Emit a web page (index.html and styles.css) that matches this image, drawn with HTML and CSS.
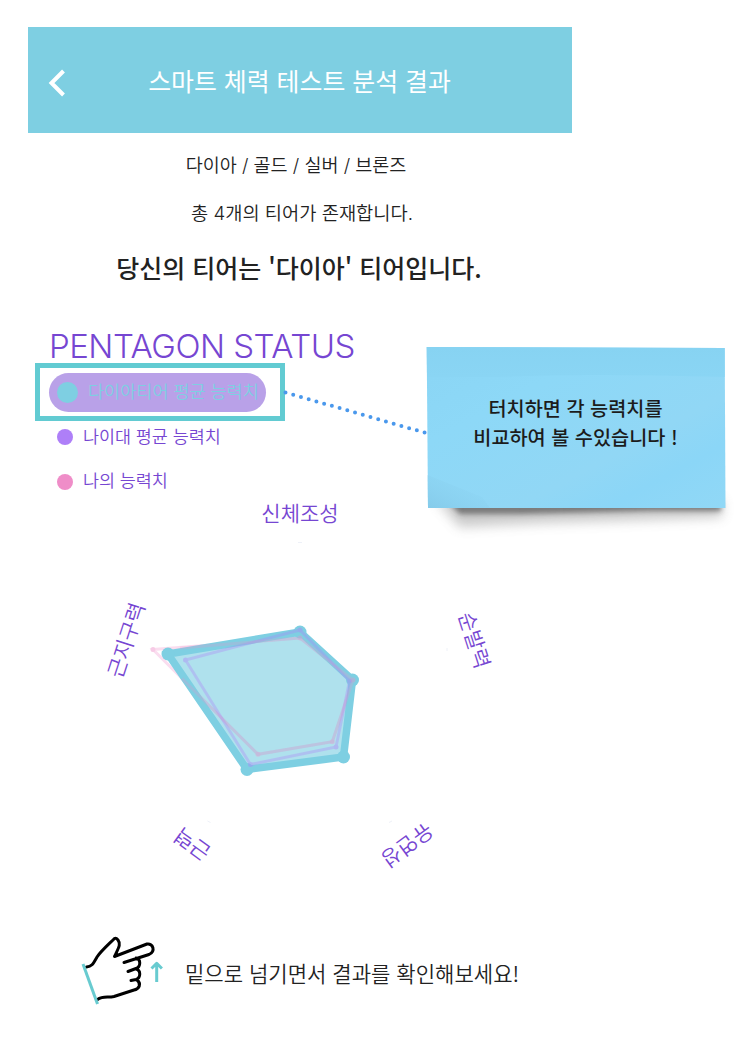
FILE: index.html
```html
<!DOCTYPE html>
<html lang="ko">
<head>
<meta charset="utf-8">
<title>스마트 체력 테스트 분석 결과</title>
<link rel="stylesheet" href="styles.css">
</head>
<body>
<div class="page">
  <main class="screen">
    <header class="header">
      <svg class="back" width="18" height="28" viewBox="0 0 18 28"><path d="M15.500 2 3.500 14 15.500 26"/></svg>
      <h1 class="title">스마트 체력 테스트 분석 결과</h1>
    </header>
    <section class="intro">
      <p class="tiers">다이아 / 골드 / 실버 / 브론즈</p>
      <p class="count">총 4개의 티어가 존재합니다.</p>
      <p class="result">당신의 티어는 '다이아' 티어입니다.</p>
    </section>
    <section class="status">
      <h2 class="status-title">PENTAGON STATUS</h2>
      <div class="focus"><div class="pill"><i class="dot dot-tier"></i><span class="pill-text">다이아티어 평균 능력치</span></div></div>
      <div class="legend"><i class="dot dot-age"></i><span class="age-text">나이대 평균 능력치</span></div>
      <div class="legend legend-me"><i class="dot dot-me"></i><span class="me-text">나의 능력치</span></div>
    </section>
    <svg class="chart" width="544" height="384" viewBox="28 495 544 384">
      <g class="labels">
        <text transform="translate(300 513)" y="7.500">신체조성</text>
        <text transform="translate(474.500 640) rotate(72)" y="8">순발력</text>
        <text transform="translate(407.500 845.500) rotate(144)" y="8">유연성</text>
        <text transform="translate(192 844.500) rotate(216)" y="8">근력</text>
        <text transform="translate(126 640) rotate(288)" y="8">근지구력</text>
      </g>
      <path class="ticks" d="M298 542.500h4M447 648v3M207.500 821l3 1.500M389 822.500l3-1.500"/>
      <g class="me"><path d="M300 638 353 680 332.300 741.700 258 754.300 153 649.500Z"/><circle cx="153" cy="649.500" r="2.500"/></g>
      <g class="tier"><path d="M300 632 352.500 680 343.500 757 247 769.500 168 654Z"/><circle cx="300" cy="632" r="6.500"/><circle cx="352.500" cy="680" r="6.500"/><circle cx="343.500" cy="757" r="6.500"/><circle cx="247" cy="769.500" r="6.500"/><circle cx="168" cy="654" r="6.500"/></g>
      <g class="age"><path d="M300 630 349.500 681 336 747 250.500 764.500 185.500 660Z"/><circle cx="300" cy="630" r="2.500"/><circle cx="349.500" cy="681" r="2.500"/><circle cx="336" cy="747" r="2.500"/><circle cx="250.500" cy="764.500" r="2.500"/><circle cx="185.500" cy="660" r="2.500"/></g>
      <g class="me overlay"><path d="M180 648 300 638 353 680 332.300 741.700 258 754.300 182 678.500"/><circle cx="300" cy="638" r="2.500"/><circle cx="353" cy="680" r="2.500"/><circle cx="332.300" cy="741.700" r="2.500"/><circle cx="258" cy="754.300" r="2.500"/></g>
    </svg>
    <footer class="guide">
      <svg class="hand" width="110" height="80" viewBox="75 930 110 80">
        <path class="ink" d="M86.500 967C92 966.500 93 964 97 957 101 951 109 944 114.500 938.500Q116 937.500 118 940C121 944 119 947 114.500 956.500L147 944C153 943 156 951 149 954.500L124 962.500M136 958C141 959 141 967 136 968.500L128 971.500M136 969C141 970 141 978 136 979.500L131 980.500M137 980C142 984 139 989 134 990L114 996.500C108 998 103 995.500 97.500 999.500"/>
        <path class="cuff" d="M83 964 97.500 1004"/>
        <path class="arrow" d="M156.700 982V963.500M151.500 968.500l5.200-5.200 5.200 5.200"/>
      </svg>
      <p class="guide-text">밑으로 넘기면서 결과를 확인해보세요!</p>
    </footer>
  </main>
  <svg class="leader" width="150" height="50" viewBox="280 388 150 50"><path d="M285.500 392.500 426 433"/></svg>
  <aside class="note">
    <svg class="paper" width="322" height="214" viewBox="415 335 322 214">
      <defs>
        <linearGradient id="blue" x1="0" y1="0" x2="1" y2="1"><stop offset="0" stop-color="#8ad5f4"/><stop offset=".3" stop-color="#8dd8f7"/><stop offset=".65" stop-color="#91d7f5"/><stop offset=".8" stop-color="#8bd6f7"/><stop offset="1" stop-color="#91d8f6"/></linearGradient>
        <linearGradient id="top" x1="0" y1="0" x2="0" y2="1"><stop offset="0" stop-color="#87d3f2"/><stop offset="1" stop-color="#8ad5f4"/></linearGradient>
        <linearGradient id="fold" x1="0" y1="1" x2="1" y2="0"><stop offset="0" stop-color="#85cbea"/><stop offset="1" stop-color="#8fd7f5" stop-opacity="0"/></linearGradient>
        <filter id="soft" x="-10%" y="-100%" width="120%" height="300%"><feGaussianBlur stdDeviation="6"/></filter>
        <filter id="tight" x="-10%" y="-100%" width="120%" height="300%"><feGaussianBlur stdDeviation="2.500"/></filter>
      </defs>
      <path d="M436 500H722V517L640 520 540 523 460 527Z" fill="#888" opacity=".45" filter="url(#soft)"/>
      <path d="M446 500H721V511L650 511 520 514 460 514Z" fill="#444" opacity=".6" filter="url(#tight)"/>
      <path d="M426.700 347 724.700 348 725.500 508 428 508Z" fill="url(#blue)"/>
      <path d="M426.700 347 724.700 348V377Q580 373 500 377H427Z" fill="url(#top)"/>
      <path d="M427.500 475 482 497 490 508H428Z" fill="url(#fold)"/>
    </svg>
    <p class="note-text"><span class="note-a">터치하면 각 능력치를</span><br><span class="note-b">비교하여 볼 수있습니다 !</span></p>
  </aside>
</div>
</body>
</html>
```
FILE: styles.css
```css
body { margin: 0; background: #fff; font-family: "Noto Sans CJK KR", sans-serif; color: #222; }
h1, h2, p { margin: 0; font-weight: 400; white-space: nowrap; }
svg { display: block; }
.page { position: relative; width: 742px; height: 1064px; overflow: hidden; }
.screen { width: 544px; padding: 27px 0 0 28px; }
.header { display: grid; grid-template-columns: 58px 1fr 58px; align-items: center; height: 105.500px; background: #7ecfe2; color: #fff; }
.back { margin: 7px 0 0 20px; fill: none; stroke: #fff; stroke-width: 4; }
.title { padding: 1px 1px 0 0; font-size: 24.900px; line-height: 36px; text-align: center; }
.intro { text-align: center; }
.tiers, .count { font: 350 18.500px/30px Inter, "Noto Sans CJK KR", sans-serif; }
.tiers { padding-right: 8px; margin-top: 17.500px; }
.count { padding-left: 4px; margin-top: 19px; font-size: 18.700px; }
.result { margin-top: 19px; padding-right: 2px; font: 500 25px/38px "Noto Sans CJK KR", sans-serif; }
.status { color: #7646d2; padding-left: 21px; }
.status-title { margin-top: 39.500px; font: 300 33px/40px Inter, sans-serif; letter-spacing: -.5px; }
.focus { display: flex; align-items: center; width: 240px; height: 48px; margin: -2.500px 0 0 -14px; border: 5px solid #62cbd2; }
.pill { display: flex; align-items: center; gap: 10px; width: 209px; height: 39px; margin-left: 9px; padding-left: 8px; border-radius: 20px; background: #b9a1e8; color: #7ecfe2; font-size: 17.500px; font-weight: 350; white-space: nowrap; }
.pill-text { padding-bottom: 3px; }
.dot { flex: none; width: 16px; height: 16px; border-radius: 50%; }
.dot-tier { width: 21px; height: 21px; background: #7ecfe2; }
.dot-age { background: #ae7ff8; }
.dot-me { background: #ef8dc8; }
.legend { display: flex; align-items: center; gap: 10px; margin-top: 1px; padding-left: 8px; height: 30px; font-size: 17.400px; font-weight: 350; }
.age-text, .me-text { padding-bottom: 4px; }
.legend-me { margin-top: 14.500px; }
.chart { margin-top: -2px; overflow: visible; }
.labels { fill: #7646d2; font-size: 21px; font-weight: 350; text-anchor: middle; }
.ticks { fill: none; stroke: #eef1f8; stroke-width: 1; }
.tier path { fill: rgba(126, 207, 226, .62); stroke: #7ecfe2; stroke-width: 7.500; }
.tier circle { fill: #7ecfe2; }
.age { opacity: .4; }
.age path { fill: none; stroke: #ae7ff8; stroke-width: 3; opacity: .8; }
.age circle { fill: #ae7ff8; }
.me { opacity: .45; }
.me path { fill: none; stroke: #ef8dc8; stroke-width: 3; opacity: .65; }
.me circle { fill: #ef8dc8; }
.overlay { opacity: .35; }
.guide { display: flex; margin: 51px 0 0 47px; }
.guide-text { padding-top: 27px; font-size: 21.050px; line-height: 32px; font-weight: 350; }
.hand { flex: none; fill: none; stroke-linecap: round; stroke-linejoin: round; }
.ink { stroke: #000; stroke-width: 3; }
.cuff, .arrow { stroke: #68cbd0; stroke-width: 3; stroke-linecap: butt; }
.leader { position: absolute; left: 280px; top: 388px; fill: none; stroke: #4a98ec; stroke-width: 4; stroke-linecap: round; stroke-dasharray: 0 8.040; }
.note { position: absolute; left: 415px; top: 335px; width: 322px; }
.note-text { position: absolute; left: 0; top: 58px; width: 321px; font-size: 19.700px; line-height: 29px; font-weight: 500; text-align: center; color: #1c1c1c; }
```
